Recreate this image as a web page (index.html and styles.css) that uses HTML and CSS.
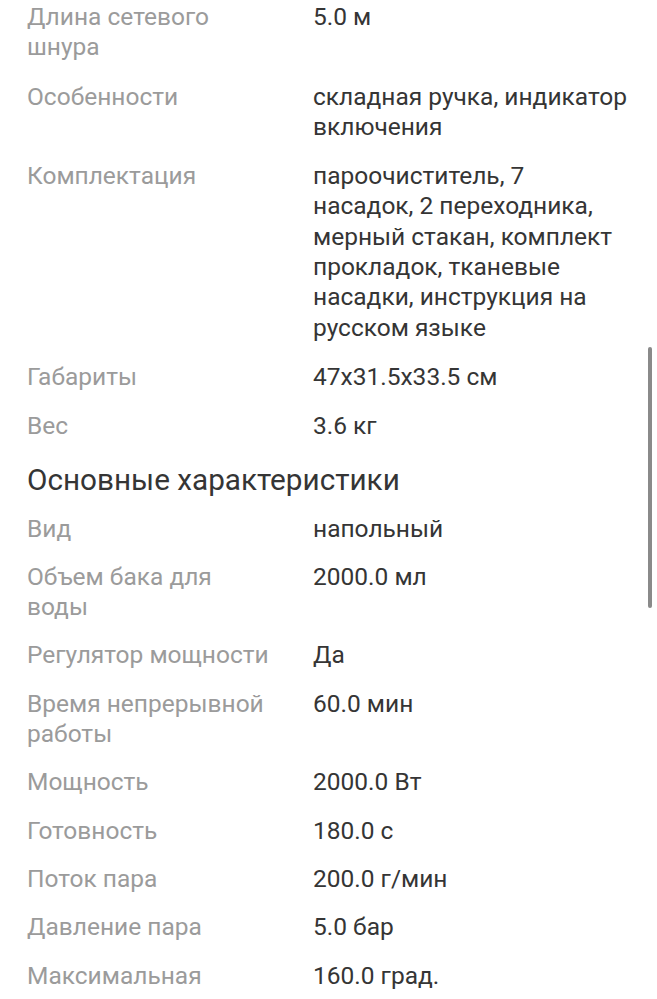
FILE: index.html
```html
<!DOCTYPE html>
<html lang="ru">
<head>
<meta charset="utf-8">
<link rel="stylesheet" href="styles.css">
</head>
<body>
<div class="page">
  <dl class="specs specs-top">
    <div class="row"><dt>Длина сетевого<br>шнура</dt><dd>5.0 м</dd></div>
    <div class="row"><dt>Особенности</dt><dd>складная ручка, индикатор<br>включения</dd></div>
    <div class="row"><dt>Комплектация</dt><dd>пароочиститель, 7<br>насадок, 2 переходника,<br>мерный стакан, комплект<br>прокладок, тканевые<br>насадки, инструкция на<br>русском языке</dd></div>
    <div class="row"><dt>Габариты</dt><dd>47x31.5x33.5 см</dd></div>
    <div class="row"><dt>Вес</dt><dd>3.6 кг</dd></div>
  </dl>
  <h2 class="section-title">Основные характеристики</h2>
  <dl class="specs">
    <div class="row"><dt>Вид</dt><dd>напольный</dd></div>
    <div class="row"><dt>Объем бака для<br>воды</dt><dd>2000.0 мл</dd></div>
    <div class="row"><dt>Регулятор мощности</dt><dd>Да</dd></div>
    <div class="row"><dt>Время непрерывной<br>работы</dt><dd>60.0 мин</dd></div>
    <div class="row"><dt>Мощность</dt><dd>2000.0 Вт</dd></div>
    <div class="row"><dt>Готовность</dt><dd>180.0 с</dd></div>
    <div class="row"><dt>Поток пара</dt><dd>200.0 г/мин</dd></div>
    <div class="row"><dt>Давление пара</dt><dd>5.0 бар</dd></div>
    <div class="row"><dt>Максимальная</dt><dd>160.0 град.</dd></div>
  </dl>
</div>
<div class="scrollbar"></div>
</body>
</html>
```
FILE: styles.css
```css
html, body {
  margin: 0;
  padding: 0;
  background: #ffffff;
  overflow: hidden;
}
body {
  font-family: Roboto, "Noto Sans", sans-serif;
  height: 999px;
}
.page {
  padding: 2px 0 0 27px;
}
.specs {
  margin: 0;
  display: flex;
  flex-direction: column;
  gap: 18px;
}
.specs-top {
  gap: 19px;
}
.row {
  display: grid;
  grid-template-columns: 286px 1fr;
}
dt {
  color: #9b9b9b;
  font-size: 24.5px;
  line-height: 30.3px;
  white-space: nowrap;
}
dd {
  margin: 0;
  color: #353535;
  font-size: 24.5px;
  line-height: 30.3px;
  white-space: nowrap;
}
.section-title {
  margin: 20px 0 16px;
  font-size: 29.7px;
  font-weight: 400;
  line-height: 36px;
  color: #353535;
}
.scrollbar {
  position: absolute;
  left: 648px;
  top: 347px;
  width: 4px;
  height: 261px;
  border-radius: 2px;
  background: #8a8a8a;
}
```
